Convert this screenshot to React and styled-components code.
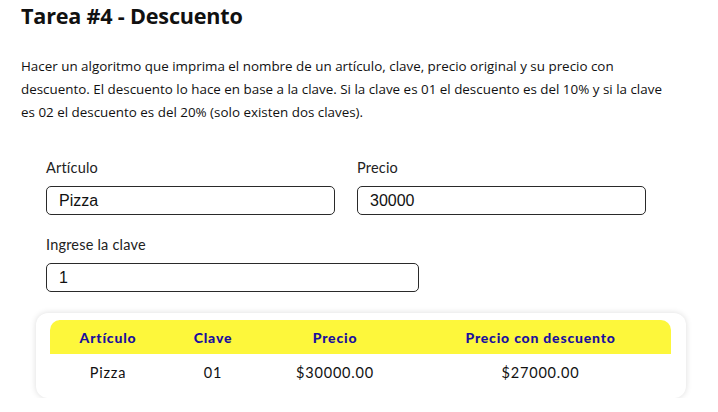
import React from 'react'
import styled, { createGlobalStyle } from 'styled-components'

const GlobalStyle = createGlobalStyle`
  body {
    margin: 0;
    background: #fff;
    color: #111;
  }
`

const Page = styled.main`
  padding: 2px 21px 0;
  width: 652px;
  h1 {
    font-family: 'Open Sans', 'Noto Sans', sans-serif;
    font-weight: 700;
    font-size: 21.6px;
    margin: 0;
    line-height: 28px;
    letter-spacing: -0.2px;
  }
  p {
    font-family: 'Open Sans', 'Noto Sans', sans-serif;
    font-size: 13.4px;
    line-height: 23px;
    margin: 25px 0 0;
    color: #111;
  }
`

const Form = styled.div`
  display: grid;
  grid-template-columns: 289px 289px;
  column-gap: 22px;
  row-gap: 21px;
  padding: 35px 0 0 25px;
`

const Field = styled.label`
  display: flex;
  flex-direction: column;
  gap: 9px;
  grid-column: ${p => (p.$wide ? '1 / span 2' : 'auto')};
  span {
    font-family: 'Lato', 'Noto Sans', sans-serif;
    font-size: 14.5px;
    line-height: 18px;
    letter-spacing: 0.2px;
    color: #222;
  }
`

const Input = styled.input`
  box-sizing: border-box;
  width: ${p => p.$w || 289}px;
  height: 29px;
  border: 1px solid #2a2a2a;
  border-radius: 5px;
  padding: 0 12px;
  font-family: 'Liberation Sans', Arial, sans-serif;
  font-size: 16px;
  color: #111;
  outline: none;
`

const Card = styled.div`
  margin: 21px 0 0 15px;
  width: 650px;
  box-sizing: border-box;
  padding: 7px 15px 7px 14px;
  border-radius: 12px;
  background: #fff;
  box-shadow: 0 0 6px rgba(0, 0, 0, 0.14);
`

const Table = styled.table`
  width: 100%;
  border-collapse: collapse;
  font-family: 'Lato', 'Noto Sans', sans-serif;
  th {
    background: #fdf73b;
    color: #1a0f9e;
    font-weight: 900;
    font-size: 14px;
    letter-spacing: 0.8px;
    height: 34px;
    padding: 0;
  }
  th:first-child { border-top-left-radius: 10px; }
  th:last-child { border-top-right-radius: 10px; }
  td {
    text-align: center;
    font-size: 14.5px;
    font-weight: 400;
    height: 35px;
    color: #111;
    letter-spacing: 0.8px;
  }
`

export default function App() {
  return (
    <>
      <GlobalStyle />
      <Page>
        <h1>Tarea #4 - Descuento</h1>
        <p>
          Hacer un algoritmo que imprima el nombre de un artículo, clave, precio original y su precio con
          descuento. El descuento lo hace en base a la clave. Si la clave es 01 el descuento es del 10% y si la clave
          es 02 el descuento es del 20% (solo existen dos claves).
        </p>
        <Form>
          <Field>
            <span>Artículo</span>
            <Input defaultValue="Pizza" />
          </Field>
          <Field>
            <span>Precio</span>
            <Input defaultValue="30000" />
          </Field>
          <Field $wide>
            <span>Ingrese la clave</span>
            <Input $w={373} defaultValue="1" />
          </Field>
        </Form>
        <Card>
          <Table>
            <thead>
              <tr>
                <th style={{ width: 116 }}>Artículo</th>
                <th style={{ width: 94 }}>Clave</th>
                <th style={{ width: 150 }}>Precio</th>
                <th>Precio con descuento</th>
              </tr>
            </thead>
            <tbody>
              <tr>
                <td>Pizza</td>
                <td>01</td>
                <td>$30000.00</td>
                <td>$27000.00</td>
              </tr>
            </tbody>
          </Table>
        </Card>
      </Page>
    </>
  )
}
